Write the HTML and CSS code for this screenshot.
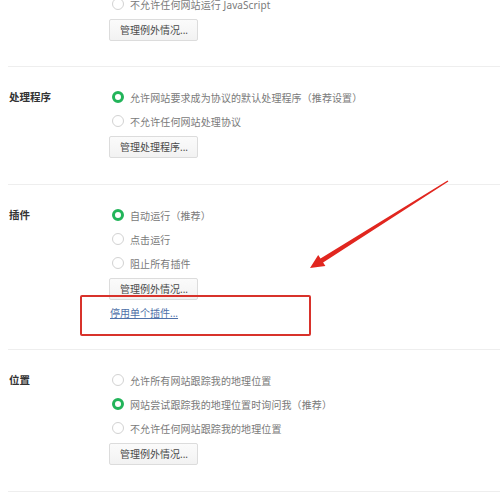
FILE: index.html
```html
<!DOCTYPE html>
<html lang="zh-CN">
<head>
<meta charset="utf-8">
<link rel="stylesheet" href="styles.css">
</head>
<body>
<div class="page">
  <section class="sec sec-first">
    <div class="label"></div>
    <div class="content">
      <div class="row"><span class="radio"></span><span>不允许任何网站运行 JavaScript</span></div>
      <div class="btn">管理例外情况...</div>
    </div>
  </section>
  <section class="sec">
    <div class="label">处理程序</div>
    <div class="content">
      <div class="row"><span class="radio on"></span><span>允许网站要求成为协议的默认处理程序（推荐设置）</span></div>
      <div class="row"><span class="radio"></span><span>不允许任何网站处理协议</span></div>
      <div class="btn">管理处理程序...</div>
    </div>
  </section>
  <section class="sec sec-plugins">
    <div class="label">插件</div>
    <div class="content">
      <div class="row"><span class="radio on"></span><span>自动运行（推荐）</span></div>
      <div class="row"><span class="radio"></span><span>点击运行</span></div>
      <div class="row"><span class="radio"></span><span>阻止所有插件</span></div>
      <div class="btn">管理例外情况...</div>
      <div class="link-row">
        <a class="link" href="#">停用单个插件...</a>
        <span class="highlight"></span>
      </div>
    </div>
  </section>
  <section class="sec">
    <div class="label">位置</div>
    <div class="content">
      <div class="row"><span class="radio"></span><span>允许所有网站跟踪我的地理位置</span></div>
      <div class="row"><span class="radio on"></span><span>网站尝试跟踪我的地理位置时询问我（推荐）</span></div>
      <div class="row"><span class="radio"></span><span>不允许任何网站跟踪我的地理位置</span></div>
      <div class="btn">管理例外情况...</div>
    </div>
  </section>
  <svg class="arrow" width="500" height="495" viewBox="0 0 500 495">
    <polygon fill="#e1261f" points="447.6,180.4 320.5,258.6 318.2,255 310,268 325.4,266 323.1,262.4 448.4,181.6"/>
  </svg>
</div>
</body>
</html>
```
FILE: styles.css
```css
html, body {
  margin: 0;
  padding: 0;
  background: #ffffff;
}
body {
  font-family: "Noto Sans", "Noto Sans CJK SC", sans-serif;
  font-size: 10px;
  color: #666;
  overflow: hidden;
  width: 500px;
  height: 495px;
}
.page {
  position: relative;
  width: 500px;
  height: 495px;
  overflow: hidden;
}
.sec {
  display: flex;
  padding: 18px 0 26px 0;
  margin-left: 8px;
  border-bottom: 1px solid #eeeeee;
}
.sec-first {
  padding-top: 0;
  margin-top: -8px;
  padding-bottom: 25px;
}
.sec-plugins {
  padding-bottom: 28px;
}
.label {
  width: 100px;
  flex: none;
  padding-left: 1px;
  height: 24px;
  line-height: 24px;
  font-weight: bold;
  font-size: 10.5px;
  color: #333;
  font-family: "Noto Sans CJK SC", sans-serif;
}
.content {
  display: flex;
  flex-direction: column;
  align-items: flex-start;
}
.row {
  height: 24px;
  display: flex;
  align-items: center;
  font-size: 10px;
  color: #7a7a7a;
  letter-spacing: 0.1px;
}
.radio {
  width: 10px;
  height: 10px;
  border: 1px solid #d2d2d2;
  border-radius: 50%;
  margin-left: 3px;
  margin-right: 6px;
  background: #fff;
  flex: none;
}
.radio.on {
  width: 6px;
  height: 6px;
  border: 3px solid #22b45a;
}
.btn {
  margin-top: 3px;
  height: 20px;
  line-height: 20px;
  padding: 0 9px 0 10px;
  border: 1px solid #dcdcdc;
  border-radius: 2px;
  background: linear-gradient(#fbfbfb, #f2f2f2);
  color: #4a4a4a;
  font-size: 10px;
}
.link-row {
  position: relative;
  margin-top: 5px;
  height: 16px;
  line-height: 16px;
}
.link {
  color: #4e70a8;
  text-decoration: underline;
  font-size: 10px;
  margin-left: 1px;
}
.highlight {
  position: absolute;
  left: -29px;
  top: -10px;
  width: 227px;
  height: 37px;
  border: 2px solid #d8322b;
  border-radius: 2px;
}
.arrow {
  position: absolute;
  left: 0;
  top: 0;
  pointer-events: none;
}
```
